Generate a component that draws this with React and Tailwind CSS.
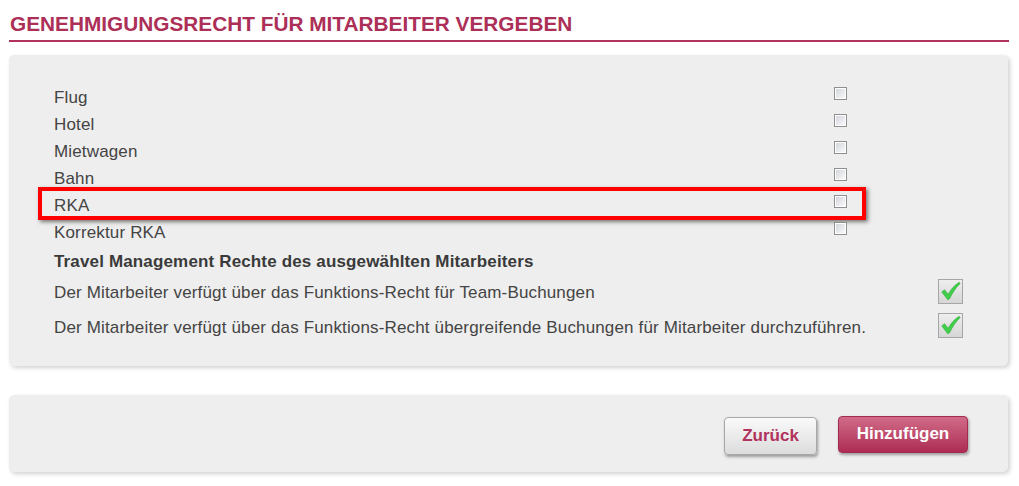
import React from "react";

function Box() {
  return (
    <span className="block w-[13px] h-[13px] mb-[5px] border border-[#8f8f8f] bg-white p-[1px]">
      <span className="block w-full h-full bg-gradient-to-br from-[#d3d6dc] to-[#f8f9fb]" />
    </span>
  );
}

function Check() {
  return (
    <span className="block w-[25px] h-[25px] border border-[#a6a6a6] bg-gradient-to-b from-[#eeeeee] to-[#d6d6d6] relative">
      <svg viewBox="0 0 25 25" className="absolute inset-0 w-full h-full">
        <path
          d="M3 13 L6 10.5 L10 15.5 C13 10 17 5.5 22 2.5 L23 4 C18.5 8 14.5 14 11.5 20.5 L9.5 21.5 Z"
          fill="#3fcf4a"
          stroke="#2fa83a"
          strokeWidth="0.6"
        />
      </svg>
    </span>
  );
}

const items = ["Flug", "Hotel", "Mietwagen", "Bahn", "RKA", "Korrektur RKA"];

export default function App() {
  return (
    <div
      className="w-[1019px] h-[486px] bg-white overflow-hidden"
      style={{ fontFamily: '"Liberation Sans", Arial, sans-serif' }}
    >
      <div className="pt-[12px] pl-[10px]">
        <h1 className="text-[20.8px] leading-[24px] font-bold text-[#ac2f58]">
          GENEHMIGUNGSRECHT FÜR MITARBEITER VERGEBEN
        </h1>
      </div>
      <div className="ml-[9px] w-[1000px] mt-[4px] h-[2px] bg-[#b1325c]" />

      <div className="ml-[9px] mt-[13px] w-[999px] h-[311px] bg-[#eeeeee] rounded-[5px] shadow-[2px_2px_4px_rgba(0,0,0,0.18)] pl-[45px] pt-[27px]">
        <div className="flex flex-col">
          {items.map((it) => (
            <div key={it} className="relative flex items-center h-[27px]">
              <span className="w-[780px] text-[17px] tracking-[0.15px] text-[#444444] leading-none pt-[3px]">{it}</span>
              <Box />
              {it === "RKA" && (
                <span className="absolute left-[-16px] top-[-3px] w-[828px] h-[33px] border-[4px] border-[#ff0000] shadow-[2px_2px_4px_rgba(0,0,0,0.5)]" />
              )}
            </div>
          ))}
        </div>
        <div className="mt-[8px] text-[17px] tracking-[0.15px] font-bold text-[#3a3a3a] leading-[19px]">
          Travel Management Rechte des ausgewählten Mitarbeiters
        </div>
        <div className="mt-[6px] flex items-center h-[28px]">
          <span className="w-[884px] text-[17px] tracking-[0.15px] text-[#444444] leading-none pt-[3px]">
            Der Mitarbeiter verfügt über das Funktions-Recht für Team-Buchungen
          </span>
          <Check />
        </div>
        <div className="mt-[6px] flex items-center h-[28px]">
          <span className="w-[884px] text-[17px] tracking-[0.15px] text-[#444444] leading-none pt-[5px]">
            Der Mitarbeiter verfügt über das Funktions-Recht übergreifende Buchungen für Mitarbeiter durchzuführen.
          </span>
          <Check />
        </div>
      </div>

      <div className="ml-[9px] mt-[29px] w-[999px] h-[77px] bg-[#eeeeee] rounded-[5px] shadow-[2px_2px_4px_rgba(0,0,0,0.18)] flex items-center justify-end pr-[40px] gap-[21px]">
        <button className="w-[93px] h-[38px] mt-[4px] rounded-[4px] border border-[#a8a8a8] bg-gradient-to-b from-[#fafafa] to-[#dcdcdc] text-[#b1325c] font-bold text-[17px] shadow-[1px_2px_3px_rgba(0,0,0,0.35)]">
          Zurück
        </button>
        <button className="w-[130px] h-[37px] mt-[1px] rounded-[4px] border border-[#a32a50] bg-gradient-to-b from-[#d06a88] to-[#ad2b55] text-white font-bold text-[17px] shadow-[1px_2px_3px_rgba(0,0,0,0.35)]">
          Hinzufügen
        </button>
      </div>
    </div>
  );
}
